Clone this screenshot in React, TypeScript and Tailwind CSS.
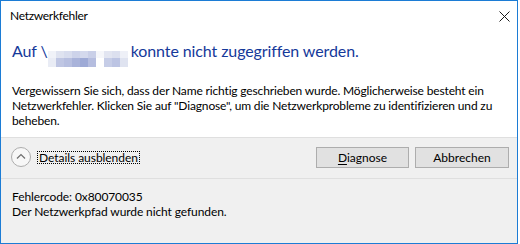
const mosaicCells = [
  'bg-[#f0f2f8]', 'bg-[#dfe3f0]', 'bg-[#d8ddee]', 'bg-[#cdd3ea]', 'bg-[#d4d9ed]',
  'bg-[#c9cfe8]', 'bg-[#f5f6fa]', 'bg-[#e2e5f1]', 'bg-[#dce0ef]', 'bg-[#eef0f7]',
  'bg-[#e9ecf5]', 'bg-[#bfc6e3]', 'bg-[#b7bfe0]', 'bg-[#a9b3da]', 'bg-[#9eaad6]',
  'bg-[#b5bddf]', 'bg-[#ffffff]', 'bg-[#c6cde7]', 'bg-[#bcc4e3]', 'bg-[#dfe3f0]',
];

// verpixelter Servername
const Mosaic = () => (
  <span className="inline-grid grid-cols-[repeat(10,8px)] grid-rows-[7px_9px] align-[-1px] mr-[3px]">
    {mosaicCells.map((c, i) => (
      <span key={i} className={c} />
    ))}
  </span>
);

const CloseIcon = () => (
  <svg width="11" height="11" viewBox="0 0 11 11" className="block">
    <path d="M0.5 0.5 L10.5 10.5 M10.5 0.5 L0.5 10.5" stroke="#1a1a1a" strokeWidth="1" fill="none" />
  </svg>
);

const CollapseIcon = () => (
  <svg width="20" height="20" viewBox="0 0 20 20" className="block">
    <circle cx="10" cy="10" r="9.5" fill="#f7f7f7" stroke="#adadad" strokeWidth="1" />
    <path d="M6 11.5 L10 7.5 L14 11.5" stroke="#6f6f6f" strokeWidth="1.2" fill="none" />
  </svg>
);

export default function App() {
  return (
    <div className="w-[520px] h-[244px] bg-white">
      <div className="w-[518px] h-[244px] border border-[#1c7cd5] flex flex-col text-black font-['Lato',sans-serif]">
        {/* Titelleiste */}
        <div className="h-[30px] flex items-center justify-between pl-[9px] pr-[7px]">
          <span className="text-[12px] tracking-[-0.3px]">Netzwerkfehler</span>
          <CloseIcon />
        </div>

        {/* Inhalt */}
        <div className="h-[106px] px-[11px] pt-[9px]">
          <div className="text-[16px] leading-[22px] tracking-[-0.1px] text-[#15399a] whitespace-nowrap">
            Auf \<Mosaic />konnte nicht zugegriffen werden.
          </div>
          <p className="mt-[16px] text-[12px] leading-[15px] tracking-[-0.15px] whitespace-nowrap">
            Vergewissern Sie sich, dass der Name richtig geschrieben wurde. Möglicherweise besteht ein
            <br />
            Netzwerkfehler. Klicken Sie auf "Diagnose", um die Netzwerkprobleme zu identifizieren und zu
            <br />
            beheben.
          </p>
        </div>

        {/* Schaltflächen */}
        <div className="h-[41px] border-t border-[#dfdfdf] bg-[#f0f0f0] flex items-start justify-between pl-[10px] pr-[8px] pt-[9px]">
          <div className="flex items-center gap-[6px]">
            <CollapseIcon />
            <span className="text-[12px] leading-[11px] px-[1px] border border-dotted border-black tracking-[-0.05px]">
              Details ausblenden
            </span>
          </div>
          <div className="flex gap-[6px]">
            <button className="w-[93px] h-[21px] bg-[#e1e1e1] border border-[#adadad] text-[12px] leading-none">
              <span className="underline underline-offset-[2px]">D</span>iagnose
            </button>
            <button className="w-[94px] h-[21px] bg-[#e1e1e1] border border-[#adadad] text-[12px] leading-none">
              Abbrechen
            </button>
          </div>
        </div>

        {/* Details */}
        <div className="flex-1 border-t border-[#dfdfdf] bg-[#f0f0f0] px-[11px] pt-[10px] text-[12px] leading-[15px] tracking-[-0.1px]">
          <div>Fehlercode: 0x80070035</div>
          <div>Der Netzwerkpfad wurde nicht gefunden.</div>
        </div>
      </div>
    </div>
  );
}
